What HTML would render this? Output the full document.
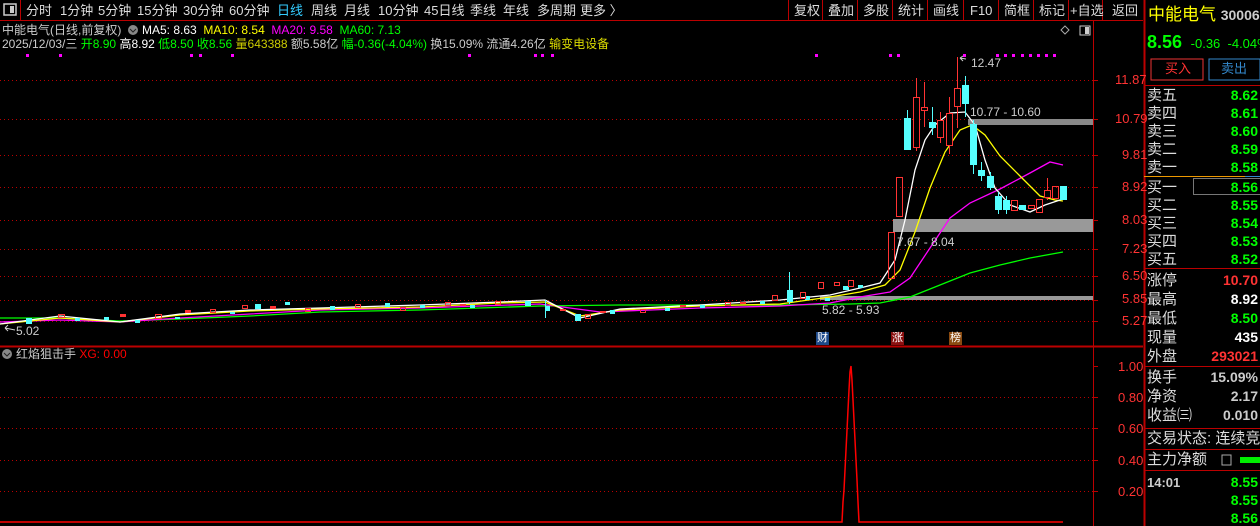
<!DOCTYPE html>
<html><head><meta charset="utf-8"><style>
*{margin:0;padding:0;box-sizing:border-box}
body{width:1260px;height:526px;background:#000;overflow:hidden;position:relative;font-family:"Liberation Sans","Noto Sans CJK SC",sans-serif;color:#ccc}
.a{position:absolute;white-space:nowrap;line-height:1}
.tb{font-size:13px;color:#ddd;top:4px}
.r{font-size:15px;color:#ddd;left:1147px}
.v{font-size:14px;font-weight:bold;color:#0f0;right:2px;text-align:right}
.ax{font-size:13px;color:#f33;left:1115px}
</style></head><body>
<svg width="1260" height="526" style="position:absolute;left:0;top:0">
<!-- frames -->
<line x1="0" y1="20.5" x2="1143" y2="20.5" stroke="#b00" />
<line x1="20.5" y1="0" x2="20.5" y2="20" stroke="#b00"/>
<g stroke="#b00"><line x1="788.5" y1="0" x2="788.5" y2="20"/><line x1="822.5" y1="0" x2="822.5" y2="20"/><line x1="857.5" y1="0" x2="857.5" y2="20"/><line x1="892.5" y1="0" x2="892.5" y2="20"/><line x1="927.5" y1="0" x2="927.5" y2="20"/><line x1="963.5" y1="0" x2="963.5" y2="20"/><line x1="998.5" y1="0" x2="998.5" y2="20"/><line x1="1033.5" y1="0" x2="1033.5" y2="20"/><line x1="1068.5" y1="0" x2="1068.5" y2="20"/><line x1="1102.5" y1="0" x2="1102.5" y2="20"/></g>
<line x1="1093.5" y1="20" x2="1093.5" y2="526" stroke="#b00"/>
<line x1="1144.5" y1="0" x2="1144.5" y2="526" stroke="#b00" stroke-width="2"/>
<line x1="0" y1="346.5" x2="1143" y2="346.5" stroke="#b00" stroke-width="2"/>
<line x1="1093" y1="346.5" x2="1143" y2="346.5" stroke="#b00"/>
<!-- grid -->
<g stroke="#b00" stroke-dasharray="1,3">
<line x1="0" y1="80.5" x2="1093" y2="80.5"/><line x1="0" y1="119.5" x2="1093" y2="119.5"/><line x1="0" y1="155.5" x2="1093" y2="155.5"/><line x1="0" y1="187.5" x2="1093" y2="187.5"/><line x1="0" y1="220.5" x2="1093" y2="220.5"/><line x1="0" y1="249.5" x2="1093" y2="249.5"/><line x1="0" y1="276.5" x2="1093" y2="276.5"/><line x1="0" y1="300.5" x2="1093" y2="300.5"/><line x1="0" y1="321.5" x2="1093" y2="321.5"/>
<line x1="0" y1="397.5" x2="1093" y2="397.5"/><line x1="0" y1="428.5" x2="1093" y2="428.5"/><line x1="0" y1="460.5" x2="1093" y2="460.5"/><line x1="0" y1="491.5" x2="1093" y2="491.5"/>
</g>
<g stroke="#b00"><line x1="1093" y1="80.5" x2="1098" y2="80.5"/><line x1="1093" y1="119.5" x2="1098" y2="119.5"/><line x1="1093" y1="155.5" x2="1098" y2="155.5"/><line x1="1093" y1="187.5" x2="1098" y2="187.5"/><line x1="1093" y1="220.5" x2="1098" y2="220.5"/><line x1="1093" y1="249.5" x2="1098" y2="249.5"/><line x1="1093" y1="276.5" x2="1098" y2="276.5"/><line x1="1093" y1="300.5" x2="1098" y2="300.5"/><line x1="1093" y1="321.5" x2="1098" y2="321.5"/>
<line x1="1093" y1="366.5" x2="1098" y2="366.5"/><line x1="1093" y1="397.5" x2="1098" y2="397.5"/><line x1="1093" y1="428.5" x2="1098" y2="428.5"/><line x1="1093" y1="460.5" x2="1098" y2="460.5"/><line x1="1093" y1="491.5" x2="1098" y2="491.5"/></g>
<!-- gray bands -->
<rect x="968" y="119" width="125" height="6" fill="#888"/>
<rect x="893" y="219" width="200" height="13" fill="#999"/>
<rect x="820" y="296" width="273" height="4" fill="#999"/>
<!-- magenta dots -->
<g fill="#f0f">
<rect x="26" y="54" width="3" height="3"/><rect x="59" y="54" width="3" height="3"/><rect x="190" y="54" width="3" height="3"/><rect x="199" y="54" width="3" height="3"/><rect x="231" y="54" width="3" height="3"/><rect x="468" y="54" width="3" height="3"/><rect x="534" y="54" width="3" height="3"/><rect x="541" y="54" width="3" height="3"/><rect x="551" y="54" width="3" height="3"/><rect x="815" y="54" width="3" height="3"/><rect x="889" y="54" width="3" height="3"/><rect x="897" y="54" width="3" height="3"/><rect x="963" y="54" width="3" height="3"/>
<rect x="996" y="54" width="3" height="3"/><rect x="1004" y="54" width="3" height="3"/><rect x="1012" y="54" width="3" height="3"/><rect x="1021" y="54" width="3" height="3"/><rect x="1029" y="54" width="3" height="3"/><rect x="1037" y="54" width="3" height="3"/><rect x="1045" y="54" width="3" height="3"/><rect x="1053" y="54" width="3" height="3"/>
</g>
<!-- MA lines -->
<polyline fill="none" stroke="#0f0" stroke-width="1.3" points="0,318 60,318 120,321 180,319 250,316 320,312 420,310 540,306 620,305 700,305 780,305 850,304 880,303 910,297 940,285 970,273 1000,265 1030,258 1063,252"/>
<polyline fill="none" stroke="#f0f" stroke-width="1.3" points="0,322 60,320 120,322 180,318 250,314 320,310 420,308 540,304 600,312 700,308 780,306 830,303 860,297 890,292 910,278 930,248 950,218 970,203 1000,189 1030,173 1050,162 1063,165"/>
<polyline fill="none" stroke="#ff0" stroke-width="1.3" points="0,324 60,318 120,322 180,315 250,311 320,309 420,307 500,303 545,302 580,316 620,310 700,306 780,304 830,297 860,292 885,285 900,270 915,232 930,188 945,152 960,130 972,125 985,135 1000,156 1020,176 1040,196 1055,200 1063,201"/>
<polyline fill="none" stroke="#fff" stroke-width="1.3" points="0,324 60,316 120,322 180,314 250,310 320,308 420,305 500,302 545,300 580,318 620,309 700,305 780,300 830,295 860,288 880,283 895,260 905,220 915,170 925,140 935,125 950,113 965,112 975,125 985,160 995,188 1010,205 1030,212 1045,205 1063,199"/>
<!-- flat area candles -->
<g fill="#5ff"><rect x="26" y="318" width="6" height="6"/><rect x="75" y="318" width="5" height="3"/><rect x="104" y="317" width="5" height="3"/><rect x="135" y="320" width="5" height="3"/><rect x="175" y="317" width="5" height="2"/><rect x="230" y="312" width="5" height="2"/><rect x="255" y="304" width="6" height="5"/><rect x="285" y="302" width="5" height="3"/><rect x="330" y="306" width="5" height="4"/><rect x="385" y="303" width="5" height="4"/><rect x="420" y="305" width="5" height="3"/><rect x="470" y="305" width="5" height="3"/><rect x="525" y="301" width="6" height="5"/><rect x="545" y="306" width="5" height="5"/><rect x="575" y="314" width="6" height="7"/><rect x="610" y="310" width="5" height="4"/><rect x="665" y="308" width="5" height="3"/><rect x="700" y="305" width="5" height="3"/><rect x="760" y="301" width="5" height="3"/><rect x="787" y="290" width="6" height="12"/><rect x="805" y="296" width="5" height="4"/><rect x="825" y="298" width="5" height="3"/><rect x="843" y="286" width="6" height="4"/><rect x="858" y="285" width="5" height="3"/></g>
<g fill="none" stroke="#f33"><rect x="58.5" y="314.5" width="6" height="3"/><rect x="155.5" y="314.5" width="6" height="4"/><rect x="210.5" y="309.5" width="5" height="3"/><rect x="242.5" y="305.5" width="5" height="3"/><rect x="305.5" y="308.5" width="5" height="3"/><rect x="355.5" y="304.5" width="5" height="3"/><rect x="400.5" y="307.5" width="5" height="3"/><rect x="445.5" y="302.5" width="5" height="3"/><rect x="495.5" y="301.5" width="5" height="3"/><rect x="585.5" y="314.5" width="5" height="4"/><rect x="640.5" y="309.5" width="5" height="3"/><rect x="725.5" y="302.5" width="5" height="3"/><rect x="772.5" y="295.5" width="5" height="5"/><rect x="800.5" y="292.5" width="5" height="6"/><rect x="818.5" y="282.5" width="5" height="6"/><rect x="834.5" y="282.5" width="5" height="3"/><rect x="848.5" y="280.5" width="5" height="6"/></g>
<g fill="#f33"><rect x="120" y="314" width="6" height="3"/><rect x="185" y="310" width="6" height="3"/><rect x="270" y="306" width="6" height="3"/><rect x="460" y="304" width="6" height="2"/><rect x="560" y="309" width="6" height="2"/><rect x="600" y="311" width="6" height="2"/><rect x="680" y="305" width="6" height="2"/><rect x="740" y="302" width="6" height="2"/></g>
<line x1="789.5" y1="272" x2="789.5" y2="304" stroke="#5ff"/>
<line x1="545.5" y1="300" x2="545.5" y2="318" stroke="#5ff"/>
<!-- big candles -->
<g stroke="#f33" fill="none">
<rect x="888.5" y="232.5" width="6" height="46"/>
<rect x="896.5" y="177.5" width="6" height="39"/>
<line x1="916.5" y1="78" x2="916.5" y2="151"/><rect x="913.5" y="97.5" width="6" height="50" fill="#000"/>
<line x1="924.5" y1="82" x2="924.5" y2="127"/><rect x="921.5" y="107.5" width="6" height="3" fill="#000"/>
<line x1="940.5" y1="112" x2="940.5" y2="143"/><rect x="937.5" y="120.5" width="6" height="17" fill="#000"/>
<line x1="949.5" y1="97" x2="949.5" y2="154"/><rect x="946.5" y="113.5" width="6" height="32" fill="#000"/>
<line x1="957.5" y1="57" x2="957.5" y2="128"/><rect x="954.5" y="88.5" width="6" height="18" fill="#000"/>
<rect x="1011.5" y="200.5" width="6" height="10"/>
<rect x="1028.5" y="205.5" width="6" height="3"/>
<line x1="1047.5" y1="178" x2="1047.5" y2="200"/><rect x="1044.5" y="190.5" width="6" height="7" fill="#000"/>
<rect x="1052.5" y="186.5" width="6" height="12"/>
<rect x="1036.5" y="199.5" width="6" height="13"/>
</g>
<g stroke="#5ff"><line x1="907.5" y1="110" x2="907.5" y2="150"/><line x1="932.5" y1="107" x2="932.5" y2="135"/><line x1="965.5" y1="76" x2="965.5" y2="117"/><line x1="973.5" y1="120" x2="973.5" y2="174"/><line x1="981.5" y1="162" x2="981.5" y2="181"/><line x1="990.5" y1="172" x2="990.5" y2="190"/><line x1="998.5" y1="192" x2="998.5" y2="214"/><line x1="1006.5" y1="196" x2="1006.5" y2="214"/></g>
<g fill="#5ff"><rect x="904" y="118" width="7" height="32"/><rect x="929" y="122" width="7" height="6"/><rect x="962" y="85" width="7" height="19"/><rect x="970" y="124" width="7" height="41"/><rect x="978" y="170" width="7" height="6"/><rect x="987" y="176" width="7" height="12"/><rect x="995" y="196" width="7" height="14"/><rect x="1003" y="200" width="7" height="10"/><rect x="1019" y="205" width="7" height="5"/><rect x="1060" y="186" width="7" height="14"/></g>
<!-- markers -->
<rect x="816" y="332" width="13" height="13" fill="#1e4a8a"/><rect x="891" y="332" width="13" height="13" fill="#8a1010"/><rect x="949" y="332" width="13" height="13" fill="#8a4a10"/>
<!-- 12.47 arrow -->
<path d="M960,58 L966,59 M960,58 L963,56 M960,58 L963,61" stroke="#ccc" fill="none"/>
<path d="M5,328 L15,330 M5,328 L8,325 M5,328 L8,331" stroke="#ccc" fill="none"/>
<!-- indicator -->
<polyline fill="none" stroke="#f00" stroke-width="1.5" points="0,522 842,522 843,502 844,490 845,470 846,450 847,430 848,410 849,390 850,372 851,366 852,380 853,400 854,420 855,440 856,460 857,480 858,502 859,522 1063,522"/>
<!-- icons -->
<rect x="4" y="4" width="12" height="11" fill="none" stroke="#ccc" stroke-width="1.5"/><rect x="10" y="6" width="4" height="7" fill="#ccc"/>
<rect x="1080" y="26" width="10" height="9" fill="none" stroke="#ccc"/><rect x="1085" y="27" width="4" height="7" fill="#ccc"/>
<path d="M1065,26 L1069,30 L1065,34 L1061,30Z" fill="none" stroke="#aaa"/>
<circle cx="133" cy="30" r="5" fill="#888"/><path d="M130,29 L133,32 L136,29" stroke="#222" fill="none"/>
<circle cx="7" cy="354" r="5" fill="#888"/><path d="M4,353 L7,356 L10,353" stroke="#222" fill="none"/>
<!-- right panel lines -->
<rect x="1151" y="59" width="52" height="21" fill="none" stroke="#e33"/>
<rect x="1209" y="59" width="51" height="21" fill="none" stroke="#38c"/>
<g stroke="#b00"><line x1="1144" y1="85.5" x2="1260" y2="85.5"/><line x1="1144" y1="268.5" x2="1260" y2="268.5"/><line x1="1144" y1="366.5" x2="1260" y2="366.5"/><line x1="1144" y1="428.5" x2="1260" y2="428.5"/><line x1="1144" y1="449.5" x2="1260" y2="449.5"/><line x1="1144" y1="470.5" x2="1260" y2="470.5"/></g>
<line x1="1144" y1="176.5" x2="1245" y2="176.5" stroke="#e90"/><line x1="1245" y1="176.5" x2="1260" y2="176.5" stroke="#38c"/>
<rect x="1193.5" y="178.5" width="67" height="16" fill="none" stroke="#777"/>
<rect x="1222" y="455" width="9" height="10" fill="none" stroke="#aaa"/><rect x="1240" y="457" width="20" height="6" fill="#0e0"/>
</svg>
<!-- toolbar -->
<div class="a tb" style="left:26px">分时</div><div class="a tb" style="left:60px">1分钟</div><div class="a tb" style="left:98px">5分钟</div><div class="a tb" style="left:137px">15分钟</div><div class="a tb" style="left:183px">30分钟</div><div class="a tb" style="left:229px">60分钟</div><div class="a tb" style="left:277px;color:#3cf">日线</div><div class="a tb" style="left:311px">周线</div><div class="a tb" style="left:344px">月线</div><div class="a tb" style="left:378px">10分钟</div><div class="a tb" style="left:424px">45日线</div><div class="a tb" style="left:470px">季线</div><div class="a tb" style="left:503px">年线</div><div class="a tb" style="left:537px">多周期</div><div class="a tb" style="left:580px">更多 〉</div>
<div class="a tb" style="left:794px">复权</div><div class="a tb" style="left:828px">叠加</div><div class="a tb" style="left:863px">多股</div><div class="a tb" style="left:898px">统计</div><div class="a tb" style="left:933px">画线</div><div class="a tb" style="left:970px">F10</div><div class="a tb" style="left:1004px">简框</div><div class="a tb" style="left:1039px">标记</div><div class="a tb" style="left:1070px">+自选</div><div class="a tb" style="left:1112px">返回</div>
<!-- info lines -->
<div class="a" style="left:2px;top:24px;font-size:12px;color:#ccc">中能电气(日线,前复权)</div>
<div class="a" style="left:142px;top:24px;font-size:12px"><span style="color:#fff">MA5: 8.63</span>&nbsp; <span style="color:#ff0">MA10: 8.54</span>&nbsp; <span style="color:#f0f">MA20: 9.58</span>&nbsp; <span style="color:#0f0">MA60: 7.13</span></div>
<div class="a" style="left:2px;top:38px;font-size:12px;color:#ccc">2025/12/03/三 <span style="color:#0f0">开8.90</span> <span style="color:#fff">高8.92</span> <span style="color:#0f0">低8.50</span> <span style="color:#0f0">收8.56</span> <span style="color:#cc0">量643388</span> 额5.58亿 <span style="color:#0f0">幅-0.36(-4.04%)</span> 换15.09% 流通4.26亿 <span style="color:#dd0">输变电设备</span></div>
<!-- chart labels -->
<div class="a" style="left:971px;top:57px;font-size:12px;color:#ccc">12.47</div>
<div class="a" style="left:970px;top:106px;font-size:12px;color:#ccc">10.77 - 10.60</div>
<div class="a" style="left:897px;top:236px;font-size:12px;color:#ccc">7.67 - 8.04</div>
<div class="a" style="left:822px;top:304px;font-size:12px;color:#ccc">5.82 - 5.93</div>
<div class="a" style="left:16px;top:325px;font-size:12px;color:#ccc">5.02</div>
<div class="a" style="left:817px;top:333px;font-size:11px;color:#fff">财</div><div class="a" style="left:892px;top:333px;font-size:11px;color:#fff">涨</div><div class="a" style="left:950px;top:333px;font-size:11px;color:#fff">榜</div>
<div class="a" style="left:16px;top:348px;font-size:12px;color:#ccc">红焰狙击手 <span style="color:#f00">XG: 0.00</span></div>
<!-- axis -->
<div class="a ax" style="top:73px">11.87</div><div class="a ax" style="top:112px">10.79</div><div class="a ax" style="left:1122px;top:148px">9.81</div><div class="a ax" style="left:1122px;top:180px">8.92</div><div class="a ax" style="left:1122px;top:213px">8.03</div><div class="a ax" style="left:1122px;top:242px">7.23</div><div class="a ax" style="left:1122px;top:269px">6.50</div><div class="a ax" style="left:1122px;top:292px">5.85</div><div class="a ax" style="left:1122px;top:314px">5.27</div>
<div class="a ax" style="left:1118px;top:360px">1.00</div><div class="a ax" style="left:1118px;top:391px">0.80</div><div class="a ax" style="left:1118px;top:422px">0.60</div><div class="a ax" style="left:1118px;top:454px">0.40</div><div class="a ax" style="left:1118px;top:485px">0.20</div>
<!-- right panel -->
<div class="a" style="left:1148px;top:6px;font-size:17px;color:#ff0">中能电气 <span style="font-size:14px;color:#ccc;font-weight:bold">300062</span></div>
<div class="a" style="left:1147px;top:33px;font-size:18px;font-weight:bold;color:#0f0">8.56 <span style="font-size:13px;font-weight:normal">&nbsp;-0.36 &nbsp;-4.04%</span></div>
<div class="a" style="left:1165px;top:62px;font-size:13px;color:#f33">买入</div>
<div class="a" style="left:1221px;top:62px;font-size:13px;color:#38c">卖出</div>
<div class="a r" style="top:88px">卖五</div><div class="a v" style="top:88px">8.62</div>
<div class="a r" style="top:106px">卖四</div><div class="a v" style="top:106px">8.61</div>
<div class="a r" style="top:124px">卖三</div><div class="a v" style="top:124px">8.60</div>
<div class="a r" style="top:142px">卖二</div><div class="a v" style="top:142px">8.59</div>
<div class="a r" style="top:160px">卖一</div><div class="a v" style="top:160px">8.58</div>
<div class="a r" style="top:180px">买一</div><div class="a v" style="top:180px">8.56</div>
<div class="a r" style="top:198px">买二</div><div class="a v" style="top:198px">8.55</div>
<div class="a r" style="top:216px">买三</div><div class="a v" style="top:216px">8.54</div>
<div class="a r" style="top:234px">买四</div><div class="a v" style="top:234px">8.53</div>
<div class="a r" style="top:252px">买五</div><div class="a v" style="top:252px">8.52</div>
<div class="a r" style="top:273px">涨停</div><div class="a v" style="top:273px;color:#f33">10.70</div>
<div class="a r" style="top:292px">最高</div><div class="a v" style="top:292px;color:#fff">8.92</div>
<div class="a r" style="top:311px">最低</div><div class="a v" style="top:311px">8.50</div>
<div class="a r" style="top:330px">现量</div><div class="a v" style="top:330px;color:#fff">435</div>
<div class="a r" style="top:349px">外盘</div><div class="a v" style="top:349px;color:#f33">293021</div>
<div class="a r" style="top:370px">换手</div><div class="a v" style="top:370px;color:#ccc">15.09%</div>
<div class="a r" style="top:389px">净资</div><div class="a v" style="top:389px;color:#ccc">2.17</div>
<div class="a r" style="top:408px">收益㈢</div><div class="a v" style="top:408px;color:#ccc">0.010</div>
<div class="a r" style="top:431px">交易状态: 连续竞价</div>
<div class="a r" style="top:452px">主力净额</div>
<div class="a" style="left:1147px;top:476px;font-size:13px;font-weight:bold;color:#ccc">14:01</div>
<div class="a v" style="top:475px">8.55</div><div class="a v" style="top:493px">8.55</div><div class="a v" style="top:511px">8.56</div>
</body></html>
